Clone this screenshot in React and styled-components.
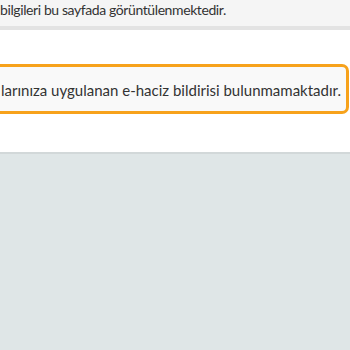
import React from 'react'
import styled, { createGlobalStyle } from 'styled-components'

const GlobalStyle = createGlobalStyle`
  html, body {
    margin: 0;
    padding: 0;
    background: #ffffff;
  }
  body {
    font-family: Lato, "Liberation Sans", sans-serif;
    color: #333333;
    overflow: hidden;
  }
`

const Page = styled.div`
  width: 350px;
  height: 350px;
  display: flex;
  flex-direction: column;
  overflow: hidden;
`

const InfoBar = styled.div`
  height: 30px;
  box-sizing: border-box;
  padding-top: 1px;
  background: #f5f5f5;
  border-bottom: 4px solid #e3e3e3;
  display: flex;
  align-items: flex-start;
  font-size: 14px;
  letter-spacing: -0.4px;
  line-height: 17px;
  white-space: nowrap;
`

const Content = styled.div`
  background: #ffffff;
  padding: 34px 1px 0 0;
  height: 122px;
  box-sizing: border-box;
  display: flex;
`

const Alert = styled.div`
  flex: 1;
  margin-left: -20px;
  padding: 2px 0 0 18px;
  height: 50px;
  box-sizing: border-box;
  border: 3px solid #f7a21b;
  border-radius: 7px;
  background: #f9f9f9;
  display: flex;
  align-items: center;
  font-size: 15px;
  white-space: nowrap;
  color: #333333;
`

const Footer = styled.div`
  flex: 1;
  background: #dfe6e7;
  border-top: 2px solid #d2d8d9;
`

export default function App() {
  return (
    <Page>
      <GlobalStyle />
      <InfoBar>bilgileri bu sayfada görüntülenmektedir.</InfoBar>
      <Content>
        <Alert>larınıza uygulanan e-haciz bildirisi bulunmamaktadır.</Alert>
      </Content>
      <Footer />
    </Page>
  )
}
